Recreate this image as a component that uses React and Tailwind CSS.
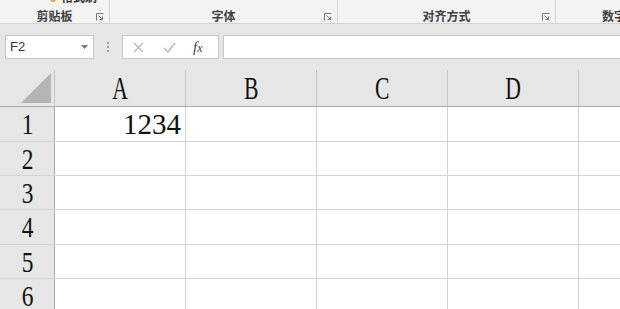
import React from 'react';

const cjk = { fontFamily: '"Noto Sans CJK SC", "Noto Sans", sans-serif' };
const serif = { fontFamily: '"Liberation Serif", "DejaVu Serif", serif' };

const Launcher = () => (
  <svg width="8" height="8" viewBox="0 0 8 8" className="shrink-0">
    <path d="M0.5 7.5V0.5H7.5" fill="none" stroke="#7a7a7a" strokeWidth="1" />
    <path d="M2.5 2.5L6.5 6.5M3.5 6.5H6.5V3.5" fill="none" stroke="#7a7a7a" strokeWidth="1" />
  </svg>
);

const RibbonGroup = ({ width, label, top, launcher = true }) => (
  <div
    className="relative flex flex-col justify-between h-full border-r border-[#d4d4d4] shrink-0"
    style={{ width }}
  >
    <div className="h-[4px] overflow-hidden">{top}</div>
    <div className="flex justify-center pb-[1px] text-[12px] leading-none font-semibold text-[#404040]" style={cjk}>
      {label}
    </div>
    {launcher && (
      <div className="absolute right-[5px] bottom-[2px]">
        <Launcher />
      </div>
    )}
  </div>
);

const cols = ['A', 'B', 'C', 'D', ''];
const rows = [
  { n: 1, h: 'h-[35px]' },
  { n: 2, h: 'h-[34px]' },
  { n: 3, h: 'h-[34px]' },
  { n: 4, h: 'h-[35px]' },
  { n: 5, h: 'h-[34px]' },
  { n: 6, h: 'h-[34px]' },
];

const App = () => {
  return (
    <div className="w-[620px] h-[309px] overflow-hidden bg-white flex flex-col">
      {/* Ribbon group labels */}
      <div className="h-[24px] bg-[#f3f3f3] border-b border-[#d4d4d4] flex overflow-hidden shrink-0">
        <RibbonGroup
          width={110}
          label="剪贴板"
          top={
            <div className="flex items-center gap-[5px] pl-[50px] -mt-[12px] text-[12px] font-semibold text-[#333]" style={cjk}>
              <span className="w-[6px] h-[10px] rounded-sm bg-[#e8a33a]" />
              <span>格式刷</span>
            </div>
          }
        />
        <RibbonGroup width={228} label="字体" />
        <RibbonGroup width={218} label="对齐方式" />
        <div className="flex flex-col justify-end h-full w-[130px] shrink-0">
          <div className="pl-[46px] pb-[1px] text-[12px] leading-none font-semibold text-[#404040]" style={cjk}>
            数字
          </div>
        </div>
      </div>

      {/* Formula bar */}
      <div className="h-[46px] bg-[#e6e6e6] flex items-start pt-[11px] pl-[5px] shrink-0">
        <div className="w-[89px] h-[24px] bg-white border border-[#c6c6c6] flex items-center justify-between pl-[4px] pr-[5px]">
          <span className="text-[13px] text-[#333]" style={{ fontFamily: '"Liberation Sans", Arial, sans-serif' }}>F2</span>
          <svg width="7" height="4" viewBox="0 0 7 4">
            <path d="M0 0H7L3.5 4Z" fill="#7a7a7a" />
          </svg>
        </div>
        <div className="w-[28px] h-[24px] flex flex-col items-center justify-center gap-[2px]">
          <span className="w-[2px] h-[2px] bg-[#a0a0a0]" />
          <span className="w-[2px] h-[2px] bg-[#a0a0a0]" />
          <span className="w-[2px] h-[2px] bg-[#a0a0a0]" />
        </div>
        <div className="w-[97px] h-[24px] bg-white border border-[#c6c6c6] flex items-center pl-[10px] gap-[19px]">
          <svg width="11" height="11" viewBox="0 0 11 11">
            <path d="M1 1L10 10M10 1L1 10" stroke="#b8b8b8" strokeWidth="1.3" />
          </svg>
          <svg width="13" height="11" viewBox="0 0 13 11">
            <path d="M1 6L5 10L12 1" fill="none" stroke="#b8b8b8" strokeWidth="1.4" />
          </svg>
          <span className="text-[15px] italic text-[#404040] -ml-[2px] leading-none" style={serif}>
            f<span className="text-[12px]">x</span>
          </span>
        </div>
        <div className="ml-[4px] flex-1 h-[24px] bg-white border border-[#c6c6c6] border-r-0" />
      </div>

      {/* Sheet grid */}
      <div className="flex-1 flex flex-col overflow-hidden">
        <div className="h-[37px] flex shrink-0 bg-[#e6e6e6] border-b border-[#ababab]">
          <div className="w-[55px] h-full border-r border-[#c6c6c6] flex items-end justify-end pr-[3px] pb-[3px] shrink-0">
            <svg width="30" height="30" viewBox="0 0 30 30">
              <path d="M30 0V30H0Z" fill="#b4b4b4" />
            </svg>
          </div>
          {cols.map((c, i) => (
            <div
              key={i}
              className="w-[131px] h-full border-r border-[#c6c6c6] flex items-center justify-center shrink-0 text-[31px] leading-none text-[#111]"
              style={serif}
            >
              <span className="inline-block scale-x-[0.7]">{c}</span>
            </div>
          ))}
        </div>
        {rows.map((r) => (
          <div key={r.n} className={`${r.h} flex shrink-0 border-b border-[#d4d4d4]`}>
            <div
              className="w-[55px] h-full bg-[#e6e6e6] border-r border-[#ababab] flex items-center justify-center shrink-0 text-[30px] leading-none text-[#111]"
              style={serif}
            >
              <span className="inline-block scale-x-[0.78]">{r.n}</span>
            </div>
            {cols.map((c, i) => (
              <div
                key={i}
                className="w-[131px] h-full border-r border-[#d4d4d4] flex items-center justify-end pr-[4px] shrink-0 text-[29px] leading-none text-[#111]"
                style={serif}
              >
                {r.n === 1 && c === 'A' ? '1234' : ''}
              </div>
            ))}
          </div>
        ))}
      </div>
    </div>
  );
};

export default App;
